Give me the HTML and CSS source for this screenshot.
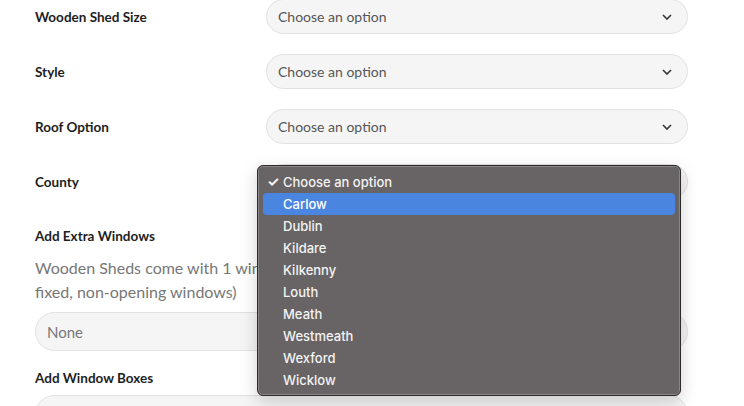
FILE: index.html
```html
<!DOCTYPE html>
<html>
<head>
<meta charset="utf-8">
<link rel="stylesheet" href="styles.css">
</head>
<body>
<div class="form">
  <div class="row">
    <div class="label">Wooden Shed Size</div>
    <div class="select"><span>Choose an option</span><svg class="chev" viewBox="0 0 10 6"><path d="M1 1 L5 5 L9 1" /></svg></div>
  </div>
  <div class="row">
    <div class="label">Style</div>
    <div class="select"><span>Choose an option</span><svg class="chev" viewBox="0 0 10 6"><path d="M1 1 L5 5 L9 1" /></svg></div>
  </div>
  <div class="row">
    <div class="label">Roof Option</div>
    <div class="select"><span>Choose an option</span><svg class="chev" viewBox="0 0 10 6"><path d="M1 1 L5 5 L9 1" /></svg></div>
  </div>
  <div class="row county">
    <div class="label">County</div>
    <div class="select"><span>Choose an option</span><svg class="chev" viewBox="0 0 10 6"><path d="M1 1 L5 5 L9 1" /></svg></div>
    <div class="menu">
      <div class="item checked"><span class="check">✓</span>Choose an option</div>
      <div class="item active">Carlow</div>
      <div class="item">Dublin</div>
      <div class="item">Kildare</div>
      <div class="item">Kilkenny</div>
      <div class="item">Louth</div>
      <div class="item">Meath</div>
      <div class="item">Westmeath</div>
      <div class="item">Wexford</div>
      <div class="item">Wicklow</div>
    </div>
  </div>
  <div class="block">
    <div class="label block-label">Add Extra Windows</div>
    <p class="desc">Wooden Sheds come with 1 window as standard (all windows are fixed, non-opening windows)</p>
    <div class="select wide"><span>None</span><svg class="chev" viewBox="0 0 10 6"><path d="M1 1 L5 5 L9 1" /></svg></div>
  </div>
  <div class="block">
    <div class="label block-label">Add Window Boxes</div>
    <div class="select wide"></div>
  </div>
</div>
</body>
</html>
```

FILE: styles.css
```css
html, body {
  margin: 0;
  padding: 0;
  background: #ffffff;
  overflow: hidden;
}
body {
  font-family: Lato, "Liberation Sans", sans-serif;
  color: #222;
}
.form {
  width: 653px;
  margin-left: 35px;
  padding-top: 0;
  margin-top: -1px;
}
.row {
  display: grid;
  grid-template-columns: 231px 1fr;
  align-items: center;
  margin-bottom: 20px;
}
.county {
  position: relative;
}
.label {
  font-size: 13.5px;
  font-weight: 700;
  color: #1e1e1e;
}
.select {
  height: 33px;
  border: 1px solid #e2e2e2;
  border-radius: 18px;
  background: #f5f5f5;
  display: flex;
  align-items: center;
  justify-content: space-between;
  padding: 0 11px 0 11px;
  font-size: 14px;
  color: #555;
}
.chev {
  width: 10px;
  height: 6px;
  fill: none;
  stroke: #333;
  stroke-width: 1.6;
  margin-right: 4px;
}
.wide {
  height: 37px;
  border-radius: 20px;
  font-size: 15px;
  color: #777;
}
.wide .chev {
  visibility: hidden;
}
.block {
  margin-top: 28px;
}
.block-label {
  line-height: 18px;
}
.desc {
  margin: 11px 0 8px;
  font-size: 16px;
  line-height: 24px;
  color: #777;
  width: 476px;
}
.block + .block {
  margin-top: 18px;
}
.block + .block .block-label {
  margin-bottom: 8px;
}
.menu {
  position: absolute;
  left: 222px;
  top: 1px;
  width: 424px;
  height: 231px;
  box-sizing: border-box;
  padding: 5px 5px;
  background: #686364;
  border: 1px solid #2c2a2a;
  border-radius: 6px;
  box-shadow: inset 0 0 0 1px #8a8687, 0 6px 18px rgba(0,0,0,0.18);
  font-family: Inter, "Noto Sans", sans-serif;
  font-size: 13px;
  font-weight: 500;
  color: #f3f3f3;
}
.item {
  height: 22px;
  line-height: 22px;
  padding-left: 20px;
  position: relative;
  border-radius: 4px;
}
.item.active {
  background: #4a86e0;
  color: #fff;
}
.check {
  position: absolute;
  left: 4px;
  top: 0;
  font-size: 14px;
  font-weight: 700;
}
```
